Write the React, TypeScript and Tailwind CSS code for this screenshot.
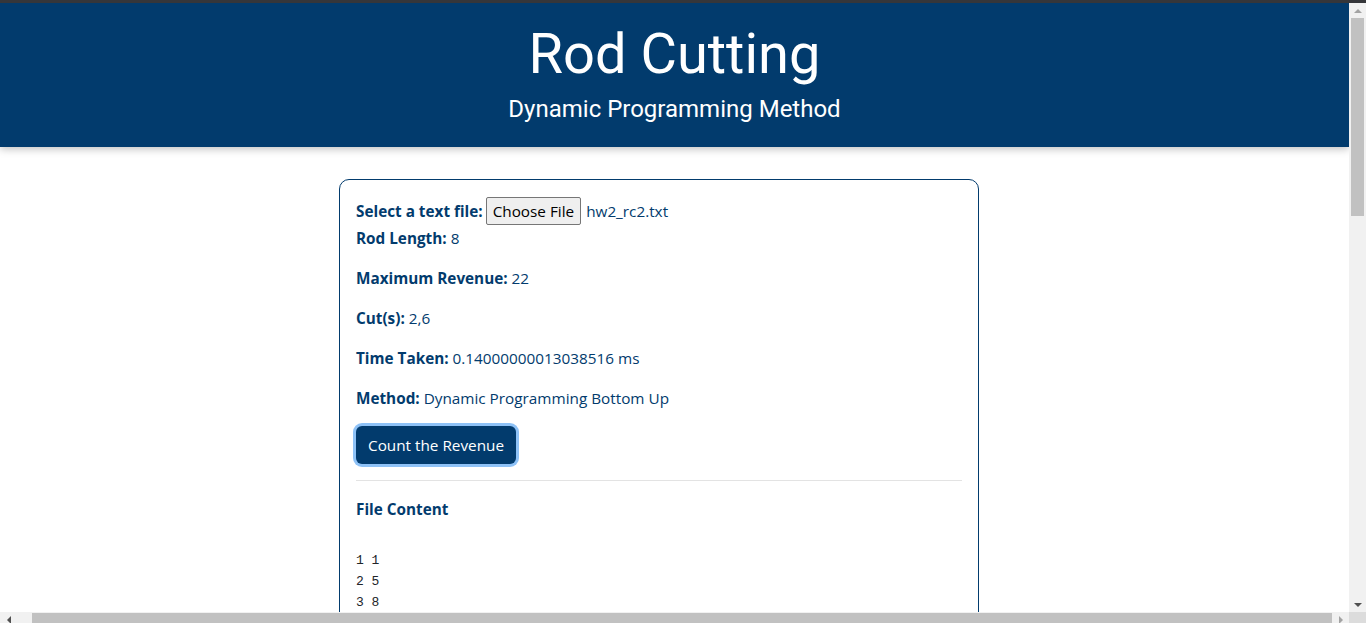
import React from 'react';

const rows: { label: string; value: string }[] = [
  { label: 'Rod Length:', value: '8' },
  { label: 'Maximum Revenue:', value: '22' },
  { label: 'Cut(s):', value: '2,6' },
  { label: 'Time Taken:', value: '0.14000000013038516 ms' },
  { label: 'Method:', value: 'Dynamic Programming Bottom Up' },
];

// first line of the file view is blank, as in the uploaded file
const fileLines = ['', '1 1', '2 5', '3 8'];

const Arrow: React.FC<{ dir: 'up' | 'down' | 'left' | 'right'; color: string }> = ({ dir, color }) => {
  const pts = {
    up: '0,4 4,0 8,4',
    down: '0,0 8,0 4,4',
    left: '4,0 4,8 0,4',
    right: '0,0 0,8 4,4',
  }[dir];
  const w = dir === 'up' || dir === 'down' ? 8 : 4;
  const h = dir === 'up' || dir === 'down' ? 4 : 8;
  return (
    <svg width={w} height={h} viewBox={`0 0 ${w} ${h}`}>
      <polygon points={pts} fill={color} />
    </svg>
  );
};

const App: React.FC = () => {
  return (
    <div className="h-[623px] overflow-hidden flex flex-col bg-white">
      <div className="h-[3px] shrink-0 bg-[#35363a]" />
      <div className="flex flex-1 min-h-0">
        <div className="flex-1 min-w-0 overflow-hidden" style={{ fontFamily: '"Open Sans", sans-serif' }}>
          {/* header */}
          <div className="relative z-10 h-[144px] bg-[#023b6d] flex flex-col items-center pt-[18px] text-white shadow-[0_2px_8px_rgba(0,0,0,0.25)]" style={{ fontFamily: 'Roboto, sans-serif' }}>
            <h1 className="text-[56px] leading-[67px] font-normal">Rod Cutting</h1>
            <h2 className="mt-[7px] text-[24px] leading-[29px] font-normal">Dynamic Programming Method</h2>
          </div>

          {/* card */}
          <div className="ml-[339px] mt-[32px] w-[640px] border border-[#023b6d] rounded-[10px] px-4 pt-4 pb-6 text-[#023b6d] text-[15.3px] leading-6">
            <div className="flex items-center h-[30px]">
              <span className="font-bold mr-[3px]">Select a text file:</span>
              <span className="h-[28px] px-[6px] border border-[#767676] rounded-[2px] bg-[#efefef] text-black flex items-center">
                Choose File
              </span>
              <span className="ml-[5px]">hw2_rc2.txt</span>
            </div>
            {rows.map((r) => (
              <p key={r.label} className="mb-4">
                <span className="font-bold">{r.label}</span> {r.value}
              </p>
            ))}
            <button className="h-[38px] px-3 rounded-[6px] bg-[#023b6d] text-white shadow-[0_0_0_3px_#8ec2f7]">
              Count the Revenue
            </button>
            <hr className="my-4 border-t border-[#e3e3e3]" />
            <h5 className="font-bold mb-2">File Content</h5>
            <pre className="text-[13px] leading-[21px] text-[#212529]" style={{ fontFamily: '"Liberation Mono", monospace' }}>
              {fileLines.join('\n')}
            </pre>
          </div>
        </div>

        {/* vertical scrollbar */}
        <div className="w-[17px] shrink-0 bg-[#f1f1f1] flex flex-col items-center">
          <div className="h-[15px] flex items-center justify-center">
            <Arrow dir="up" color="#a3a3a3" />
          </div>
          <div className="w-[13px] h-[198px] bg-[#c1c1c1]" />
          <div className="flex-1" />
          <div className="h-[15px] flex items-center justify-center">
            <Arrow dir="down" color="#505050" />
          </div>
        </div>
      </div>

      {/* horizontal scrollbar */}
      <div className="h-[11px] shrink-0 flex bg-[#f1f1f1]">
        <div className="w-[17px] flex items-center justify-center pt-[4px]">
          <Arrow dir="left" color="#505050" />
        </div>
        <div className="flex-1 flex pt-[1px] pl-[15px]">
          <div className="w-[1300px] h-full bg-[#c1c1c1]" />
        </div>
        <div className="w-[17px] flex items-center justify-center pt-[4px]">
          <Arrow dir="right" color="#a3a3a3" />
        </div>
        <div className="w-[17px] bg-[#dcdcdc]" />
      </div>
    </div>
  );
};

export default App;
